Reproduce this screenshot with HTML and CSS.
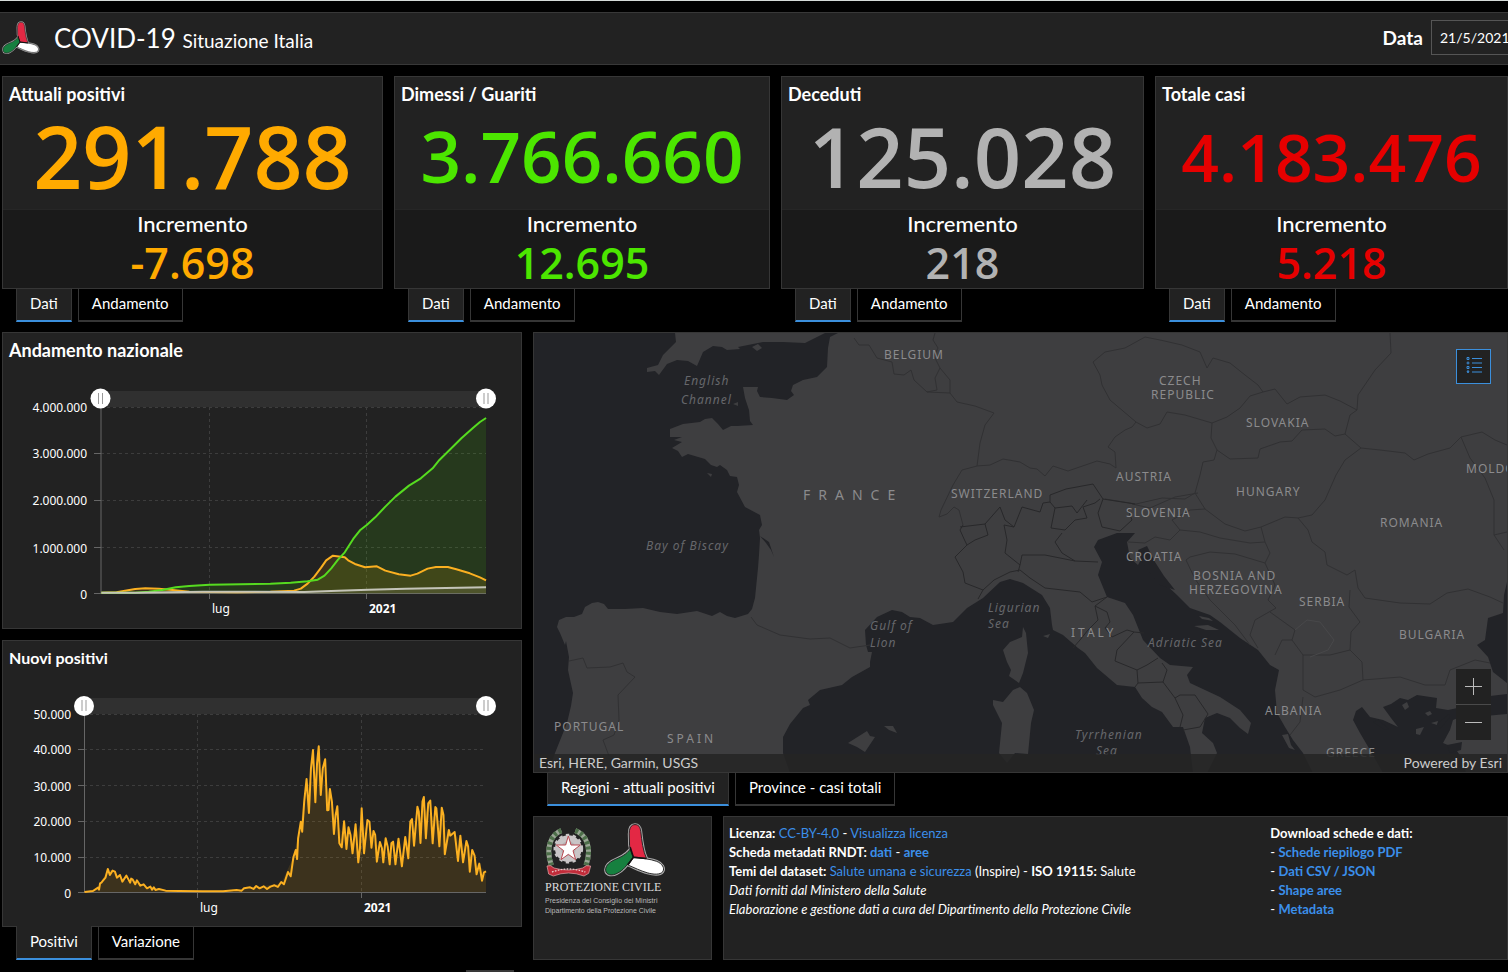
FILE: index.html
```html
<!DOCTYPE html>
<html lang="it">
<head>
    <meta charset="UTF-8">
    <meta name="viewport" content="width=device-width, initial-scale=1.0">
    <title>COVID-19 Situazione Italia</title>
    <link rel="stylesheet" href="styles.css">
</head>
<body>
    <!-- shared logo -->
    <svg class="defs" width="0" height="0" aria-hidden="true">
        <symbol id="pc-logo" viewBox="-4 -4 194 172">
            <g stroke="#aaa" stroke-width="9" stroke-linejoin="round">
                <path d="M83 70C72 90 55 100 36 108C16 116 0 128 1 144C3 160 22 162 38 153C55 145 66 130 88 102Z"/>
                <path d="M88 104C110 106 140 108 161 116C178 123 187 137 180 148C172 159 150 157 132 152C108 145 92 136 72 128Z"/>
                <path d="M93 1C80 1 75 14 75 30L76 66C78 80 82 90 88 102L129 107C118 84 114 50 111 22C109 8 104 1 93 1Z"/>
            </g>
            <path fill="#16803f" stroke="#222" stroke-width="3" d="M83 70C72 90 55 100 36 108C16 116 0 128 1 144C3 160 22 162 38 153C55 145 66 130 88 102Z"/>
            <path fill="#fff" stroke="#222" stroke-width="3" d="M88 104C110 106 140 108 161 116C178 123 187 137 180 148C172 159 150 157 132 152C108 145 92 136 72 128Z"/>
            <path fill="#e32844" stroke="#222" stroke-width="3" d="M93 1C80 1 75 14 75 30L76 66C78 80 82 90 88 102L129 107C118 84 114 50 111 22C109 8 104 1 93 1Z"/>
            <path fill="none" stroke="#111" stroke-width="5" d="M78 72L88 103L128 107M88 103L70 127"/>
        </symbol>
    </svg>

    <header class="header">
        <svg class="header-logo"><use href="#pc-logo"/></svg>
        <h1>COVID-19 <small>Situazione Italia</small></h1>
        <label for="date">Data</label>
        <input type="text" id="date" value="21/5/2021">
    </header>

    <section class="cards">
        <article>
            <div class="card">
                <h2>Attuali positivi</h2>
                <p class="total orange size-xl">291.788</p>
                <div class="delta">
                    <h3>Incremento</h3>
                    <p class="orange">-7.698</p>
                </div>
            </div>
            <nav class="tabs">
                <button class="tab active">Dati</button>
                <button class="tab">Andamento</button>
            </nav>
        </article>
        <article>
            <div class="card">
                <h2>Dimessi / Guariti</h2>
                <p class="total green size-m">3.766.660</p>
                <div class="delta">
                    <h3>Incremento</h3>
                    <p class="green">12.695</p>
                </div>
            </div>
            <nav class="tabs">
                <button class="tab active">Dati</button>
                <button class="tab">Andamento</button>
            </nav>
        </article>
        <article>
            <div class="card">
                <h2>Deceduti</h2>
                <p class="total gray size-l">125.028</p>
                <div class="delta">
                    <h3>Incremento</h3>
                    <p class="gray">218</p>
                </div>
            </div>
            <nav class="tabs">
                <button class="tab active">Dati</button>
                <button class="tab">Andamento</button>
            </nav>
        </article>
        <article>
            <div class="card">
                <h2>Totale casi</h2>
                <p class="total red size-s">4.183.476</p>
                <div class="delta">
                    <h3>Incremento</h3>
                    <p class="red">5.218</p>
                </div>
            </div>
            <nav class="tabs">
                <button class="tab active">Dati</button>
                <button class="tab">Andamento</button>
            </nav>
        </article>
    </section>

    <main class="main">
        <div class="column">
            <section class="panel">
                <h2>Andamento nazionale</h2>
                <svg class="chart" viewBox="3 370 518 258">
                    <rect class="range" x="101" y="391" width="385" height="16"/>
                    <path class="grid" d="M101 407.5H486M101 453.5H486M101 500.5H486M101 547.5H486M209.5 407V593M366.5 407V593"/>
                    <path class="axis" d="M101 407V593M94 453.5H101M94 500.5H101M94 547.5H101M94 593.5H486M209.5 593V599M366.5 593V599"/>
                    <g class="labels" text-anchor="end">
                        <text x="87" y="412">4.000.000</text>
                        <text x="87" y="458">3.000.000</text>
                        <text x="87" y="505">2.000.000</text>
                        <text x="87" y="553">1.000.000</text>
                        <text x="87" y="599">0</text>
                    </g>
                    <g class="labels">
                        <text x="212" y="613">lug</text>
                        <text x="369" y="613" class="bold">2021</text>
                    </g>
                    <g transform="translate(0 325) scale(.338 .3333)">
                        <path class="area green-area" d="M300 803L400 803 440 800 480 795 520 787 560 783 620 779 800 776 860 773 910 769 940 764 960 752 980 730 1000 704 1020 682 1045 642 1065 616 1085 600 1110 577 1140 545 1170 515 1210 482 1245 460 1280 430 1300 405 1330 375 1365 340 1400 308 1420 291 1438 279V805H300Z"/>
                        <path class="area orange-area" d="M300 803L345 802 370 797 400 792 430 790 470 791 510 795 560 800 700 802 800 800 870 797 890 791 910 776 930 755 950 728 965 706 985 692 1020 697 1030 706 1050 717 1080 727 1115 724 1140 737 1180 748 1215 752 1235 746 1265 731 1290 726 1325 726 1350 733 1390 745 1420 757 1438 766V805H300Z"/>
                        <path class="area gray-area" d="M300 803L900 801 1090 794 1438 787V805H300Z"/>
                        <polyline class="line orange-line" points="300,803 345,802 370,797 400,792 430,790 470,791 510,795 560,800 700,802 800,800 870,797 890,791 910,776 930,755 950,728 965,706 985,692 1020,697 1030,706 1050,717 1080,727 1115,724 1140,737 1180,748 1215,752 1235,746 1265,731 1290,726 1325,726 1350,733 1390,745 1420,757 1438,766"/>
                        <polyline class="line green-line" points="300,803 400,803 440,800 480,795 520,787 560,783 620,779 800,776 860,773 910,769 940,764 960,752 980,730 1000,704 1020,682 1045,642 1065,616 1085,600 1110,577 1140,545 1170,515 1210,482 1245,460 1280,430 1300,405 1330,375 1365,340 1400,308 1420,291 1438,279"/>
                        <polyline class="line gray-line" points="300,803 400,803 600,800 900,801 1000,797 1090,794 1200,791 1438,787"/>
                    </g>
                    <g class="grip">
                        <circle cx="100.5" cy="398.5" r="10"/><path d="M98.5 393V404M102.5 393V404"/>
                        <circle cx="486" cy="398.5" r="10"/><path d="M484 393V404M488 393V404"/>
                    </g>
                </svg>
            </section>

            <section>
                <div class="panel">
                    <h2 class="small-title">Nuovi positivi</h2>
                    <svg class="chart" viewBox="3 678 518 248">
                        <rect class="range" x="84" y="698" width="402" height="16"/>
                        <path class="grid" d="M84 714.5H486M84 749.5H486M84 785.5H486M84 821.5H486M84 857.5H486M197.5 714V892M361.5 714V892"/>
                        <path class="axis" d="M84.5 714V892M78 749.5H84M78 785.5H84M78 821.5H84M78 857.5H84M78 892.5H486M197.5 892V898M361.5 892V898"/>
                        <g class="labels" text-anchor="end">
                            <text x="71" y="719">50.000</text>
                            <text x="71" y="754">40.000</text>
                            <text x="71" y="791">30.000</text>
                            <text x="71" y="826">20.000</text>
                            <text x="71" y="862">10.000</text>
                            <text x="71" y="898">0</text>
                        </g>
                        <g class="labels">
                            <text x="200" y="912">lug</text>
                            <text x="364" y="912" class="bold">2021</text>
                        </g>
                        <g transform="translate(0 635) scale(.338 .3333)">
                            <path class="area orange-area" d="M250 771L290 758 319 702 333 707 362 735 400 742 435 760 490 767 600 769 700 765 758 757 832 745 868 667 890 560 907 450 920 440 930 440 938 385 950 420 962 440 976 480 998 570 1018 600 1043 620 1070 560 1087 590 1124 640 1153 660 1189 660 1219 590 1239 560 1254 520 1273 540 1307 560 1328 590 1345 595 1380 640 1404 680 1438 710V771Z"/>
                            <polyline class="line orange-line" points="250,771 275,768 290,758 293,764 296,745 300,743 304,738 312,728 319,702 325,720 333,707 340,710 346,728 355,720 362,740 374,722 385,743 388,731 392,733 400,748 405,736 415,752 425,748 435,760 445,755 450,764 455,757 460,765 470,762 490,767 530,768 600,769 660,769 700,765 715,767 722,760 740,757 750,762 758,753 768,760 780,754 790,762 800,755 812,751 822,756 832,741 840,748 852,711 860,724 868,667 875,645 879,672 882,610 890,560 894,590 900,500 907,432 914,534 920,400 926,345 933,502 938,385 943,334 949,480 955,400 962,373 968,526 972,525 976,462 982,500 988,597 993,540 998,514 1004,625 1011,637 1018,559 1025,642 1031,577 1037,600 1043,655 1052,568 1060,682 1065,640 1070,520 1077,655 1087,555 1093,560 1099,638 1105,588 1110,600 1115,680 1124,621 1130,640 1134,682 1141,610 1147,635 1153,688 1158,625 1163,620 1170,688 1179,611 1189,694 1199,606 1208,670 1214,560 1219,552 1225,632 1235,515 1239,530 1244,624 1250,500 1254,486 1260,610 1267,505 1273,497 1280,625 1288,516 1291,520 1300,634 1307,518 1312,540 1316,658 1328,585 1332,602 1345,591 1355,678 1362,602 1370,682 1380,618 1385,635 1390,710 1397,645 1404,662 1410,718 1418,686 1426,737 1432,712 1438,709"/>
                        </g>
                        <g class="grip">
                            <circle cx="84" cy="706" r="10"/><path d="M82 700V711M86 700V711"/>
                            <circle cx="486" cy="706" r="10"/><path d="M484 700V711M488 700V711"/>
                        </g>
                    </svg>
                </div>
                <nav class="tabs">
                    <button class="tab active joined">Positivi</button>
                    <button class="tab">Variazione</button>
                </nav>
            </section>
        </div>

        <div class="column column-right">
            <section class="map-section">
                <div class="map">
                    <svg class="map-canvas" viewBox="534 333 973 439" preserveAspectRatio="xMidYMid slice">
                        <g class="land">
                            <!-- Great Britain -->
                            <path d="M675 333L676 342 663 355 658 365 647 368 647 372 655 371 659 375 667 364 677 360 688 361 697 366 703 352 713 346 722 347 727 350 740 349 738 347 763 342 783 342 805 343 817 337 825 333Z"/>
                            <path d="M752 347L758 344 762 348 757 351Z"/>
                            <!-- mainland -->
                            <path d="M838 333L830 337 828 348 827 367 817 377 803 380 793 385 791 391 794 395 787 400 772 398 760 397 757 391 758 387 743 387 745 398 749 410 750 421 753 425 737 426 731 426 723 430 718 424 712 418 705 419 700 422 683 424 670 429 670 437 682 437 674 440 682 442 672 448 678 451 682 457 688 454 705 459 711 465 717 467 720 465 727 470 730 476 737 477 739 485 737 492 745 507 760 515 762 525 759 530 760 538 759 555 758 568 755 598 752 609 748 614 735 618 727 616 720 612 712 616 697 611 677 614 660 612 643 608 625 609 608 609 604 604 598 602 592 603 585 607 582 614 574 617 566 617 559 620 557 627 560 633 565 645 566 641 569 657 568 670 573 693 571 706 567 723 555 753 548 773 790 773 783 753 783 737 790 724 803 708 810 705 808 700 820 690 842 685 852 677 870 667 870 662 872 652 868 652 866 645 865 630 877 617 892 610 902 612 910 617 920 618 933 625 953 622 967 608 983 598 1000 582 1010 579 1023 583 1042 595 1050 608 1052 625 1053 630 1063 635 1078 648 1085 653 1097 668 1117 685 1135 687 1142 698 1152 707 1162 712 1173 727 1183 727 1190 747 1193 773 1207 773 1217 753 1213 743 1202 733 1205 718 1217 713 1230 718 1240 728 1248 734 1251 723 1240 710 1220 697 1190 683 1187 675 1193 667 1170 665 1160 658 1143 640 1133 615 1125 603 1107 597 1098 575 1102 562 1094 547 1098 540 1117 533 1135 533 1127 542 1130 558 1138 565 1147 548 1153 562 1163 582 1177 595 1190 608 1210 615 1220 622 1240 638 1258 650 1270 665 1279 670 1275 690 1277 713 1285 727 1293 740 1303 753 1313 773 1383 773 1370 750 1360 733 1353 720 1356 711 1362 707 1370 717 1383 720 1398 727 1391 718 1383 707 1391 704 1400 698 1408 700 1417 695 1437 698 1436 708 1448 710 1462 707 1475 700 1490 696 1507 694 1507 683 1493 672 1488 657 1477 645 1485 640 1488 618 1503 613 1504 595 1507 582 1507 333Z"/>
                            <!-- Anatolia -->
                            <path d="M1507 714L1485 716 1470 713 1453 720 1450 730 1443 743 1455 748 1463 760 1466 773 1507 773Z"/>
                            <!-- Corsica, Sardinia, Balearics -->
                            <path d="M1023 627L1026 633 1028 653 1023 673 1019 683 1009 676 1011 670 1007 662 1003 650 1010 642 1022 637Z"/>
                            <path d="M1020 687L1027 693 1034 710 1031 723 1028 754 1015 753 1007 763 999 753 1002 723 993 705 993 700 1003 702 1013 690Z"/>
                            <path d="M848 743L867 731 870 736 875 737 865 752 857 747Z"/>
                            <path d="M884 726L893 726 897 733 889 730Z"/>
                            <!-- Aegean and Adriatic islands -->
                            <path d="M1402 705L1407 702 1409 707 1405 710Z"/>
                            <path d="M1425 713L1430 711 1432 714 1428 716Z"/>
                            <path d="M1431 723L1438 721 1437 725Z"/>
                            <path d="M1416 729L1424 727 1420 735 1416 734Z"/>
                            <path d="M1282 735L1288 734 1291 745 1295 750 1289 748Z"/>
                            <path d="M1043 636L1050 634 1048 638Z"/>
                            <path d="M733 404L738 402 738 406Z"/>
                            <path d="M707 473L712 474 711 477Z"/>
                            <path d="M1157 573L1164 583 1169 588 1160 582Z"/>
                            <path d="M1199 616L1209 618 1213 621 1202 619Z"/>
                            <path d="M1194 626L1208 625 1219 630 1206 630Z"/>
                        </g>
                        <g class="inlet">
                            <path d="M760 536L769 542 774 557 771 550 766 543Z"/>
                            <path d="M1373 722L1378 720 1389 729 1385 730Z"/>
                            <path d="M1447 745L1462 742 1461 750 1450 753Z"/>
                            <path d="M1437 724L1449 714 1450 717 1440 729Z"/>
                            <path d="M1138 550L1147 546 1155 562 1164 576 1175 590 1160 585 1150 573 1142 562Z"/>
                        </g>
                        <g class="border">
                            <path d="M854 338L859 345 869 345 877 358 892 362 894 374 904 375 911 370 914 380 927 392 950 393 957 402 975 406 994 413 985 425 980 443 977 466 962 470 953 485 941 510 939 517 947 514 954 507 959 510 963 525"/>
                            <path d="M977 466L990 465 1003 459 1020 462 1030 468 1037 469 1045 476 1053 466 1068 471 1097 461 1110 464 1116 468 1115 452 1108 447 1115 437 1125 430 1132 427 1136 422 1110 400 1102 385 1100 375 1093 362 1105 352 1125 348 1145 337 1160 340 1182 345 1200 352 1207 368 1213 358 1230 363 1245 375 1258 385 1263 392 1275 389 1287 404 1300 397 1325 395 1340 401 1357 410 1358 395 1375 370 1391 353 1390 333"/>
                            <path d="M927 392L937 390 935 378 940 368 934 356 938 348 933 340 935 333M940 368L950 380 950 393"/>
                            <path d="M1136 422L1147 428 1160 424 1167 412 1185 415 1212 423 1227 417 1240 408 1250 396 1263 392M1212 423L1211 438 1217 450 1214 460 1203 462 1200 475 1195 493 1185 499 1162 498 1136 504 1105 499"/>
                            <path d="M1217 450L1230 459 1258 458 1260 449 1280 442 1292 441 1302 430 1325 429 1335 436 1345 434 1350 415 1357 410M1345 434L1361 448 1345 460 1336 475 1325 500 1312 515 1298 518 1285 517 1261 527 1245 531 1225 524 1205 509 1195 493"/>
                            <path d="M1361 448L1380 450 1405 453 1414 460 1428 454 1450 448 1461 437 1482 432 1495 440 1507 445M1461 437L1470 458 1485 478 1494 500 1494 535 1504 550M1494 535L1507 532"/>
                            <path d="M1298 518L1308 530 1312 542 1325 552 1327 565 1347 575 1355 570 1358 588 1365 598 1400 603 1430 604 1447 593 1468 589 1490 597 1503 603M1350 590L1349 607 1360 622 1351 632 1350 650"/>
                            <path d="M1261 527L1265 542 1270 553 1265 563 1235 554 1210 552 1190 557 1186 560 1195 579 1210 600 1235 625 1250 645"/>
                            <path d="M1132 504L1150 508 1175 497 1198 493M1128 542L1145 543 1155 537 1170 540 1180 530 1172 520 1190 510 1205 509M1180 530L1200 532 1220 538 1250 543 1265 542"/>
                            <path d="M1265 563L1275 585 1268 600 1276 608 1255 620 1250 635 1258 648M1270 612L1295 630 1292 640 1303 655 1330 655 1350 650 1362 662 1363 680 1340 690 1315 697 1303 690 1303 655M1275 655L1282 640 1292 640M1303 697L1300 722 1290 735M1363 680L1400 677 1425 685 1445 685M1445 685L1450 670 1475 660 1490 663"/>
                            <path class="kosovo" d="M1295 630L1307 620 1320 622 1334 640 1328 650 1310 657"/>
                            <path d="M751 617L757 625 780 635 810 639 830 638 850 648 870 645M569 661L583 658 587 668 610 667 623 663 627 672 635 677 618 695 619 720 614 735 603 740 609 756"/>
                        </g>
                        <!-- Italian regions -->
                        <g class="region">
                            <path d="M963 525L960 530 965 541 967 545 955 557 963 572 965 583 983 590 994 580 1010 572 1020 570 1030 578 1045 588 1080 592 1092 602 1107 597"/>
                            <path d="M960 527L985 524 988 535 975 540 967 545M985 524L1000 507 1005 520 1014 527 1022 507 1040 512 1043 503 1050 502 1050 495 1066 489 1093 484 1103 499 1135 504"/>
                            <path d="M1014 527L1004 525 1007 540 1005 553 1020 565 1022 555 1045 555 1075 561 1098 562M1020 565L1018 572"/>
                            <path d="M1050 502L1055 508 1051 528 1065 530 1075 520 1087 518 1083 507 1095 503 1100 499M1055 508L1072 506 1077 513 1087 500M1062 533L1055 542 1062 553 1075 561M1103 499L1098 513 1102 527 1120 531 1132 520 1128 510M983 590L978 599"/>
                            <path d="M1107 597L1095 606 1098 620 1088 630 1080 640 1073 648M1095 606L1107 612 1110 622 1105 628 1112 637 1127 630 1134 632 1117 650 1115 661 1137 670 1138 683 1135 687M1134 632L1144 633M1137 670L1147 665 1158 658M1138 683L1163 682 1167 670 1162 663M1163 682L1175 698 1180 695 1195 695 1208 714 1200 727 1183 730M1175 698L1183 715 1180 727"/>
                        </g>
                        <g class="place">
                            <text x="884" y="359">BELGIUM</text>
                            <text x="1159" y="385">CZECH</text>
                            <text x="1151" y="399">REPUBLIC</text>
                            <text x="1246" y="427">SLOVAKIA</text>
                            <text x="1116" y="481">AUSTRIA</text>
                            <text x="1236" y="496">HUNGARY</text>
                            <text x="1466" y="473">MOLDOVA</text>
                            <text x="951" y="498">SWITZERLAND</text>
                            <text x="1126" y="517">SLOVENIA</text>
                            <text x="1380" y="527">ROMANIA</text>
                            <text x="1126" y="561">CROATIA</text>
                            <text x="1193" y="580">BOSNIA AND</text>
                            <text x="1189" y="594">HERZEGOVINA</text>
                            <text x="1299" y="606">SERBIA</text>
                            <text x="1399" y="639">BULGARIA</text>
                            <text x="1265" y="715">ALBANIA</text>
                            <text x="1326" y="757">GREECE</text>
                            <text x="554" y="731">PORTUGAL</text>
                            <text class="wide" x="667" y="743">SPAIN</text>
                            <text class="wide" x="1071" y="637">ITALY</text>
                            <text class="widest" x="803" y="500">FRANCE</text>
                        </g>
                        <g class="sea">
                            <text x="684" y="385">English</text>
                            <text x="681" y="404">Channel</text>
                            <text x="646" y="550">Bay of Biscay</text>
                            <text x="988" y="612">Ligurian</text>
                            <text x="988" y="628">Sea</text>
                            <text x="870" y="630">Gulf of</text>
                            <text x="870" y="647">Lion</text>
                            <text x="1148" y="647">Adriatic Sea</text>
                            <text x="1075" y="739">Tyrrhenian</text>
                            <text x="1096" y="755">Sea</text>
                        </g>
                    </svg>
                    <button class="legend-button" aria-label="Legenda">
                        <svg width="16" height="18" viewBox="0 0 16 18" fill="none" stroke="#3b8fdc">
                            <path d="M1 1.5h2v2h-2zM1 10.5h2v2h-2zM1 15h2l-1 2z"/>
                            <circle cx="2" cy="7" r="1"/>
                            <path d="M6 2.5h10M6 7h10M6 11.5h10M6 16h10"/>
                        </svg>
                    </button>
                    <div class="zoom">
                        <button aria-label="Ingrandisci"><svg width="17" height="17" viewBox="0 0 17 17"><path d="M0 8.5H17M8.5 0V17"/></svg></button>
                        <button aria-label="Riduci"><svg width="17" height="17" viewBox="0 0 17 17"><path d="M0 8.5H17"/></svg></button>
                    </div>
                    <div class="attribution"><span>Esri, HERE, Garmin, USGS</span><span>Powered by Esri</span></div>
                </div>
                <nav class="tabs">
                    <button class="tab active">Regioni - attuali positivi</button>
                    <button class="tab">Province - casi totali</button>
                </nav>
            </section>

            <section class="bottom">
                <div class="panel brand">
                    <div class="brand-logos">
                        <svg width="48" height="52" viewBox="43 40 144 156">
                            <g fill="none" stroke-width="15">
                                <path stroke="#9aa695" d="M92 54C60 66 44 106 62 158M134 54C168 66 184 106 166 158"/>
                                <path stroke="#4d6f49" stroke-dasharray="9 7" d="M92 54C60 66 44 106 62 158M134 54C168 66 184 106 166 158"/>
                            </g>
                            <circle cx="113" cy="108" r="40" fill="#c9c5c6"/>
                            <circle cx="113" cy="108" r="40" fill="none" stroke="#c9c5c6" stroke-width="9" stroke-dasharray="10 10"/>
                            <circle cx="113" cy="108" r="22" fill="#b5b0b2"/>
                            <path fill="#fff" stroke="#b84a52" stroke-width="3" d="M113 70L121 97 149 97 127 114 135 141 113 125 91 141 99 114 77 97 105 97Z"/>
                            <path fill="#c12c3a" stroke="#e7aeb0" stroke-width="2" d="M49 160Q60 155 70 166Q113 178 156 166Q166 155 180 160L174 182 160 190Q113 172 68 190L54 184Z"/>
                            <path fill="none" stroke="#e9c9c9" stroke-width="4" stroke-dasharray="5 4" d="M64 178Q113 160 164 178"/>
                        </svg>
                        <svg width="62" height="55"><use href="#pc-logo"/></svg>
                    </div>
                    <p class="brand-name">PROTEZIONE CIVILE</p>
                    <p class="brand-sub">Presidenza del Consiglio dei Ministri<br>Dipartimento della Protezione Civile</p>
                </div>
                <div class="panel info">
                    <div>
                        <p><b>Licenza:</b> <a href="#">CC-BY-4.0</a> - <a href="#">Visualizza licenza</a></p>
                        <p><b>Scheda metadati RNDT: <a href="#">dati</a></b> - <b><a href="#">aree</a></b></p>
                        <p><b>Temi del dataset:</b> <a href="#">Salute umana e sicurezza</a> (Inspire) - <b>ISO 19115:</b> Salute</p>
                        <p><i>Dati forniti dal Ministero della Salute</i></p>
                        <p><i>Elaborazione e gestione dati a cura del Dipartimento della Protezione Civile</i></p>
                    </div>
                    <div class="downloads">
                        <p><b>Download schede e dati:</b></p>
                        <p>- <b><a href="#">Schede riepilogo PDF</a></b></p>
                        <p>- <b><a href="#">Dati CSV / JSON</a></b></p>
                        <p>- <b><a href="#">Shape aree</a></b></p>
                        <p>- <b><a href="#">Metadata</a></b></p>
                    </div>
                </div>
            </section>
        </div>
    </main>
    <div class="drawer-handle"></div>
</body>
</html>
```
FILE: styles.css
```css
* {
    box-sizing: border-box;
}

body {
    margin: 0;
    border-top: 1px solid #d5dbd8;
    background-color: #000;
    color: #fff;
    font-family: Lato, "Liberation Sans", sans-serif;
    overflow-x: hidden;
}

h1, h2, h3, p {
    margin: 0;
}

a {
    color: #3b8fea;
    text-decoration: none;
}

button {
    font-family: inherit;
    color: inherit;
    cursor: pointer;
}

.defs {
    position: absolute;
}

/* header */
.header {
    display: flex;
    align-items: center;
    height: 53px;
    margin-top: 11px;
    padding: 0 0 2px 2px;
    background-color: #222;
    border-top: 1px solid #383838;
    border-bottom: 1px solid #383838;
}

.header-logo {
    width: 38px;
    height: 34px;
}

.header h1 {
    flex: 1;
    margin-left: 14px;
    font-size: 26px;
    font-weight: 400;
}

.header small {
    font-size: 19px;
}

.header label {
    margin-right: 8px;
    font-size: 19px;
    font-weight: 700;
}

.header input {
    width: 77px;
    height: 35px;
    padding: 0 0 0 8px;
    border: 1px solid #555;
    border-right: none;
    background-color: #222;
    color: #fff;
    font-family: inherit;
    font-size: 14px;
}

/* number cards */
.cards {
    display: grid;
    grid-template-columns: 381fr 376fr 363fr 353fr;
    gap: 11px;
    margin-top: 11px;
    padding-left: 2px;
}

.card, .panel {
    background-color: #222;
    border: 1px solid #363636;
}

.card {
    display: flex;
    flex-direction: column;
    height: 213px;
    text-align: center;
}

.card h2, .panel h2 {
    padding: 0 6px;
    font-size: 18px;
    line-height: 34px;
    text-align: left;
}

.panel h2 {
    padding-bottom: 3px;
}

.panel .small-title {
    font-size: 16px;
}

.total {
    flex: 1;
    font-family: "Open Sans", "Noto Sans", sans-serif;
    font-weight: 600;
    line-height: 90px;
}

.size-xl { font-size: 86px; }
.size-l { font-size: 83px; }
.size-m { font-size: 71px; }
.size-s { font-size: 66px; }

.delta {
    height: 79px;
    border-top: 1px solid #262626;
    background-color: #1a1a1a;
}

.delta h3 {
    font-size: 22px;
    font-weight: 500;
    line-height: 27px;
}

.delta p {
    font-family: "Open Sans", "Noto Sans", sans-serif;
    font-size: 43px;
    font-weight: 600;
    line-height: 51px;
}

.orange { color: #ffaa00; }
.green { color: #4ce600; }
.gray { color: #b2b2b2; }
.red { color: #e60000; }

/* tabs */
.tabs {
    display: flex;
    gap: 6px;
    padding-left: 14px;
}

.tab {
    height: 33px;
    padding: 0 13px 3px;
    border: 1px solid #363636;
    border-top: none;
    border-bottom-width: 2px;
    background-color: #000;
    font-size: 15px;
}

.tab.active {
    background-color: #222;
    border-bottom-color: #3b8fdc;
}

.tab.joined {
    margin-top: -1px;
    height: 34px;
}

/* lower area */
.main {
    display: grid;
    grid-template-columns: 520fr 975fr;
    gap: 11px;
    margin-top: 10px;
    padding-left: 2px;
}

.column {
    display: flex;
    flex-direction: column;
    gap: 11px;
    min-width: 0;
}

.column-right {
    gap: 10px;
}

/* charts */
.chart {
    display: block;
    width: 100%;
}

.range {
    fill: #303030;
}

.grid, .axis {
    fill: none;
    stroke: #3d3d3d;
}

.grid {
    stroke-dasharray: 3 3;
}

.axis {
    stroke: #666;
}

.labels {
    fill: #fff;
    font-family: "Noto Sans", sans-serif;
    font-size: 12px;
}

.bold {
    font-weight: 700;
}

.line {
    fill: none;
    stroke-width: 2px;
    stroke-linejoin: round;
    vector-effect: non-scaling-stroke;
}

.orange-line { stroke: #fbb021; }
.green-line { stroke: #56dc20; }
.gray-line { stroke: #c4c4b8; }

.area { fill-opacity: 0.12; }
.orange-area { fill: #ffaa00; }
.green-area { fill: #4ce600; }
.gray-area { fill: #b2b2b2; }

.grip circle {
    fill: #fff;
}

.grip path {
    stroke: #999;
}

/* map */
.map-section {
    display: flex;
    flex: 1;
    flex-direction: column;
}

.map {
    position: relative;
    flex: 1;
    min-height: 300px;
    border: 1px solid #363636;
    background-color: #222327;
    overflow: hidden;
}

.map-canvas {
    position: absolute;
    width: 100%;
    height: 100%;
}

.land {
    fill: #3e3e40;
}

.inlet {
    fill: #222327;
}

.border, .region {
    fill: none;
    stroke: #313133;
    stroke-linejoin: round;
}

.region {
    stroke: #28282a;
}

.kosovo {
    stroke: #48484a;
}

.place, .sea {
    fill: #8b8b8d;
    font-family: "Noto Sans", sans-serif;
    font-size: 12px;
    letter-spacing: 1px;
}

.sea {
    fill: #66676b;
    font-style: italic;
}

.wide {
    letter-spacing: 3px;
}

.widest {
    font-size: 14px;
    letter-spacing: 8px;
}

.legend-button, .zoom {
    position: absolute;
    right: 16px;
}

.legend-button {
    top: 16px;
    width: 35px;
    height: 35px;
    padding: 0;
    border: 1px solid #3b8fdc;
    background-color: #222;
}

.zoom {
    bottom: 32px;
    display: grid;
    gap: 1px;
    background-color: #4a4a4a;
}

.zoom button {
    display: grid;
    place-items: center;
    width: 35px;
    height: 35px;
    padding: 0;
    border: none;
    background-color: #222;
}

.zoom path {
    stroke: #bbb;
}

.attribution {
    position: absolute;
    right: 0;
    bottom: 0;
    left: 0;
    display: flex;
    justify-content: space-between;
    padding: 0 5px;
    background-color: rgba(36, 36, 36, 0.85);
    color: #ccc;
    font-size: 14px;
    line-height: 18px;
}

/* logo and licence */
.bottom {
    display: grid;
    grid-template-columns: 179px 1fr;
    gap: 11px;
    min-height: 144px;
}

.brand {
    padding: 6px 11px;
    white-space: nowrap;
}

.brand-logos {
    display: flex;
    align-items: flex-end;
    gap: 11px;
}

.brand-name {
    color: #ddd;
    font-family: "Liberation Serif", serif;
    font-size: 12px;
    line-height: 18px;
}

.brand-sub {
    color: #bbb;
    font-family: "Liberation Sans Narrow", "Liberation Sans", sans-serif;
    font-size: 7px;
    line-height: 10px;
}

.info {
    display: grid;
    grid-template-columns: 542fr 237fr;
    padding: 7px 0 0 5px;
    font-size: 13px;
    line-height: 19px;
}

.drawer-handle {
    width: 48px;
    height: 2px;
    margin: 10px 0 0 466px;
    background-color: #383838;
}
```
